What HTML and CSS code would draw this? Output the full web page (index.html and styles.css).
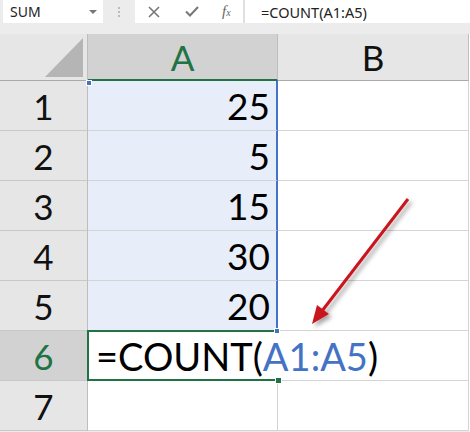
FILE: index.html
```html
<!doctype html>
<html lang="en">

<head>
    <meta charset="utf-8">
    <title>COUNT</title>
    <link rel="stylesheet" href="styles.css">
</head>

<body>

    <div class="toolbar">
        <div class="namebox">
            <span>SUM</span>
            <span class="caret"></span>
        </div>
        <div class="grip"><i></i><i></i><i></i></div>
        <div class="tools">
            <svg width="12" height="12" viewBox="0 0 12 12">
                <path d="M1 1 L11 11 M11 1 L1 11" stroke="#777" stroke-width="1.6" fill="none" />
            </svg>
            <svg width="14" height="11" viewBox="0 0 14 11">
                <path d="M1 5.5 L5 9.5 L13 1" stroke="#777" stroke-width="2" fill="none" />
            </svg>
            <span class="fx">f<small>x</small></span>
        </div>
        <div class="input">=COUNT(A1:A5)</div>
    </div>

    <div class="sheet">
        <div class="corner"></div>
        <div class="col-head active">A</div>
        <div class="col-head">B</div>

        <div class="row-head">1</div>
        <div class="cell num range first">25</div>
        <div class="cell"></div>

        <div class="row-head">2</div>
        <div class="cell num range">5</div>
        <div class="cell"></div>

        <div class="row-head">3</div>
        <div class="cell num range">15</div>
        <div class="cell"></div>

        <div class="row-head">4</div>
        <div class="cell num range">30</div>
        <div class="cell"></div>

        <div class="row-head">5</div>
        <div class="cell num range last">20</div>
        <div class="cell"></div>

        <div class="row-head active">6</div>
        <div class="cell current"><span class="edit">=COUNT(<span class="ref">A1:A5</span>)</span></div>
        <div class="cell"></div>

        <div class="row-head">7</div>
        <div class="cell"></div>
        <div class="cell"></div>
    </div>

    <!-- pointer drawn over the grid -->
    <svg class="arrow" width="470" height="432" viewBox="0 0 470 432">
        <defs>
            <filter id="shadow" x="-20%" y="-20%" width="140%" height="140%">
                <feDropShadow dx="3" dy="3" stdDeviation="2" flood-color="#000" flood-opacity=".35" />
            </filter>
        </defs>
        <g filter="url(#shadow)">
            <line x1="408" y1="199" x2="322" y2="311" stroke="#c8161d" stroke-width="3" />
            <polygon points="312,324 317,305 329,314" fill="#c8161d" />
        </g>
    </svg>

</body>

</html>
```

FILE: styles.css
```css
body {
    margin: 0;
    padding: 0;
    width: 470px;
    height: 432px;
    overflow: hidden;
    position: relative;
    background-color: #ececec;
    font-family: Lato, "Liberation Sans", sans-serif;
}

/* formula bar */

.toolbar {
    display: flex;
    height: 23px;
    font-family: "Noto Sans", "Open Sans", sans-serif;
}

.namebox {
    display: flex;
    align-items: center;
    justify-content: space-between;
    width: 100px;
    margin-left: 3px;
    padding: 0 6px 0 7px;
    box-sizing: border-box;
    background: #fff;
    font-size: 14px;
    color: #222;
}

.caret {
    width: 0;
    height: 0;
    border-left: 4px solid transparent;
    border-right: 4px solid transparent;
    border-top: 4px solid #777;
}

.grip {
    display: flex;
    flex-direction: column;
    justify-content: center;
    align-items: center;
    gap: 2px;
    width: 32px;
}

.grip i {
    width: 2px;
    height: 2px;
    background: #bbb;
}

.tools {
    display: flex;
    align-items: center;
    width: 110px;
    padding-left: 13px;
    box-sizing: border-box;
    background: #fff;
    border-right: 2px solid #e0e0e0;
}

.tools svg:first-child {
    margin-right: 25px;
}

.tools svg + svg {
    margin-right: 23px;
}

.fx {
    font-family: "Liberation Serif", serif;
    font-style: italic;
    font-size: 15px;
    color: #666;
}

.fx small {
    font-size: 10px;
}

.input {
    flex: 1;
    display: flex;
    align-items: center;
    padding-left: 16px;
    background: #fff;
    font-size: 14.5px;
    color: #222;
}

/* grid */

.sheet {
    display: grid;
    grid-template-columns: 88px 190px 191px;
    grid-template-rows: 47px repeat(7, 50px);
    margin-top: 11px;
    background: #fff;
}

.sheet > div {
    box-sizing: border-box;
}

.corner {
    position: relative;
    background: #e6e6e6;
    border-right: 1px solid #bdbdbd;
    border-bottom: 1px solid #a9a9a9;
}

.corner::after {
    content: "";
    position: absolute;
    right: 4px;
    bottom: 3px;
    width: 0;
    height: 0;
    border-left: 38px solid transparent;
    border-bottom: 39px solid #b5b5b5;
}

.col-head {
    display: flex;
    align-items: center;
    justify-content: center;
    background: #e6e6e6;
    border-right: 1px solid #bdbdbd;
    border-bottom: 1px solid #a9a9a9;
    font-size: 35px;
    color: #111;
}

.col-head.active {
    background: #d2d2d2;
    color: #217346;
    border-bottom: 2px solid #217346;
}

.row-head {
    display: flex;
    align-items: center;
    justify-content: center;
    background: #e6e6e6;
    border-right: 1px solid #bdbdbd;
    border-bottom: 1px solid #c8c8c8;
    font-size: 35px;
    color: #111;
}

.row-head.active {
    background: #d2d2d2;
    color: #217346;
}

.cell {
    display: flex;
    align-items: center;
    border-right: 1px solid #d4d4d4;
    border-bottom: 1px solid #d4d4d4;
    font-size: 37px;
    color: #000;
}

.num {
    justify-content: flex-end;
    padding-right: 6px;
}

.range {
    position: relative;
    background: #e8eef9;
    border-right: 2px solid #4472c4;
}

.range.first::before,
.range.last::after {
    content: "";
    position: absolute;
    width: 4px;
    height: 4px;
    background: #4472c4;
    border: 1px solid #fff;
}

.range.first::before {
    left: -2px;
    top: -1px;
}

.range.last::after {
    right: -4px;
    bottom: -4px;
    z-index: 3;
}

/* cell being edited: the text runs on into column B */
.current {
    position: relative;
    z-index: 1;
    padding-left: 8px;
    white-space: nowrap;
    overflow: visible;
    border-right: none;
}

.current::before {
    content: "";
    position: absolute;
    left: -1px;
    top: -1px;
    right: 0;
    bottom: -1px;
    border: 2px solid #217346;
    border-right: none;
}

.current::after {
    content: "";
    position: absolute;
    right: -4px;
    bottom: -4px;
    width: 5px;
    height: 5px;
    background: #217346;
    border: 1px solid #fff;
}

.edit {
    position: relative;
    z-index: 2;
    font-size: 38px;
}

.ref {
    color: #4472c4;
}

.arrow {
    position: absolute;
    top: 0;
    left: 0;
    pointer-events: none;
    z-index: 5;
}
```
